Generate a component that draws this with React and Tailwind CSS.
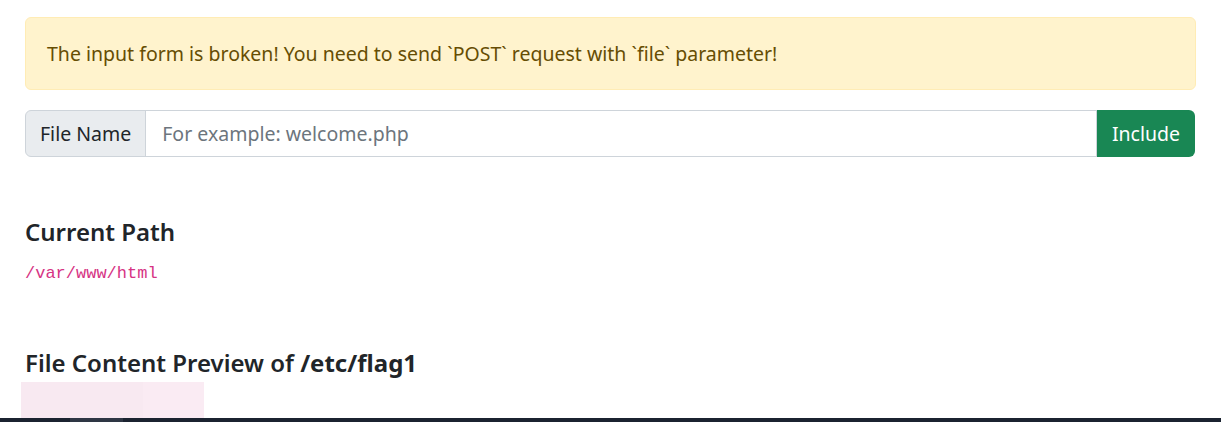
export default function App() {
  return (
    <div className="min-h-[422px] bg-white relative font-['Noto_Sans',sans-serif] text-[#212529]">
      <div className="px-[25px] pt-[17px] w-[1221px]">
        {/* Alert */}
        <div className="h-[73px] flex items-center px-[21px] bg-[#fff3cd] border border-[#ffecb5] rounded-[6px] text-[#664d03] text-[19.5px]">
          The input form is broken! You need to send `POST` request with `file` parameter!
        </div>

        {/* Input group */}
        <div className="mt-[20px] flex h-[47px] w-[1170px]">
          <span className="flex items-center px-[14px] bg-[#e9ecef] border border-[#ced4da] rounded-l-[6px] text-[19.5px] text-[#212529]">
            File Name
          </span>
          <input
            type="text"
            placeholder="For example: welcome.php"
            className="flex-1 -ml-px border border-[#ced4da] px-[16px] text-[19.5px] placeholder:text-[#6c757d] outline-none"
          />
          <button className="w-[98px] bg-[#198754] text-white text-[19.5px] rounded-r-[6px]">
            Include
          </button>
        </div>

        {/* Current path */}
        <h4 className="mt-[60px] text-[24px] font-semibold leading-[30px]">Current Path</h4>
        <code className="block mt-[17px] font-['Liberation_Mono',monospace] text-[17px] leading-[20px] text-[#d63384]">/var/www/html</code>

        <h4 className="mt-[64px] text-[24px] font-semibold leading-[30px]">
          File Content Preview of <b className="font-bold">/etc/flag1</b>
        </h4>
        <div className="flex -ml-[4px] mt-[4px] h-[36px]">
          <div className="w-[122px] bg-[#f8e9f1]" />
          <div className="w-[61px] bg-[#faebf3]" />
        </div>
      </div>

      {/* Bottom dark strip */}
      <div className="absolute left-0 right-0 bottom-0 h-[4px] bg-[#1b2330]">
        <div className="ml-[70px] w-[53px] h-full bg-[#2e3644]" />
      </div>
    </div>
  );
}
